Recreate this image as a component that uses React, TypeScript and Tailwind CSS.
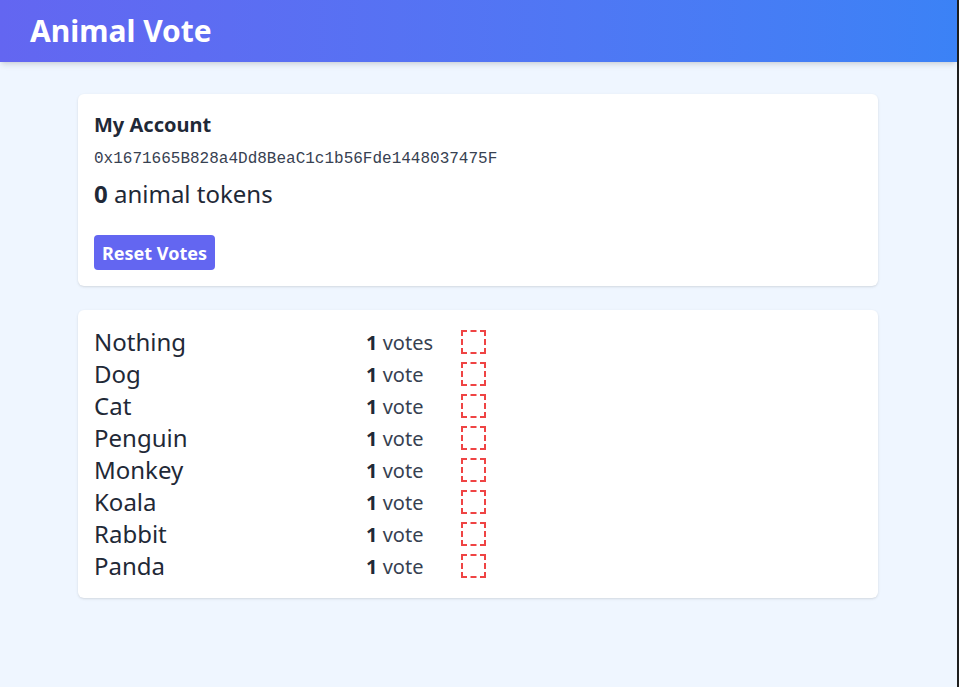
import React from "react";

const animals = ["Nothing", "Dog", "Cat", "Penguin", "Monkey", "Koala", "Rabbit", "Panda"];

export default function App() {
  return (
    <div className="min-h-screen w-[959px] bg-[#eff6ff] border-r-2 border-[#1f1f1f] text-[#1f2937]" style={{ fontFamily: '"Noto Sans", "Open Sans", sans-serif' }}>
      <header className="h-[62px] flex items-center px-[30px] bg-gradient-to-r from-[#6366f1] to-[#3b82f6] shadow-md">
        <h1 className="text-[30px] leading-[36px] font-bold text-white">Animal Vote</h1>
      </header>
      <main className="w-[800px] ml-[78px] pt-8 flex flex-col gap-6">
        <section className="bg-white rounded-md shadow p-4">
          <h2 className="text-xl leading-[30px] font-bold">My Account</h2>
          <div className="mt-[7px] text-base leading-6 text-[#374151]" style={{ fontFamily: '"Liberation Mono", monospace' }}>
            0x1671665B828a4Dd8BeaC1c1b56Fde1448037475F
          </div>
          <div className="mt-[7px] text-2xl leading-8">
            <span className="font-bold">0</span> animal tokens
          </div>
          <button className="mt-[25px] h-[35px] px-2 rounded bg-[#6366f1] text-white font-bold text-lg leading-none">
            Reset Votes
          </button>
        </section>
        <section className="bg-white rounded-md shadow p-4">
          {animals.map((a, i) => (
            <div key={a} className="flex items-center h-8">
              <div className="w-[272px] text-2xl leading-8">{a}</div>
              <div className="w-[95px] text-xl leading-8 pt-px text-[#374151]">
                <span className="font-bold text-[#1f2937]">1</span> {i === 0 ? "votes" : "vote"}
              </div>
              <div className="w-[25px] h-6 border-2 border-dashed border-[#ef4444]" />
            </div>
          ))}
        </section>
      </main>
    </div>
  );
}
